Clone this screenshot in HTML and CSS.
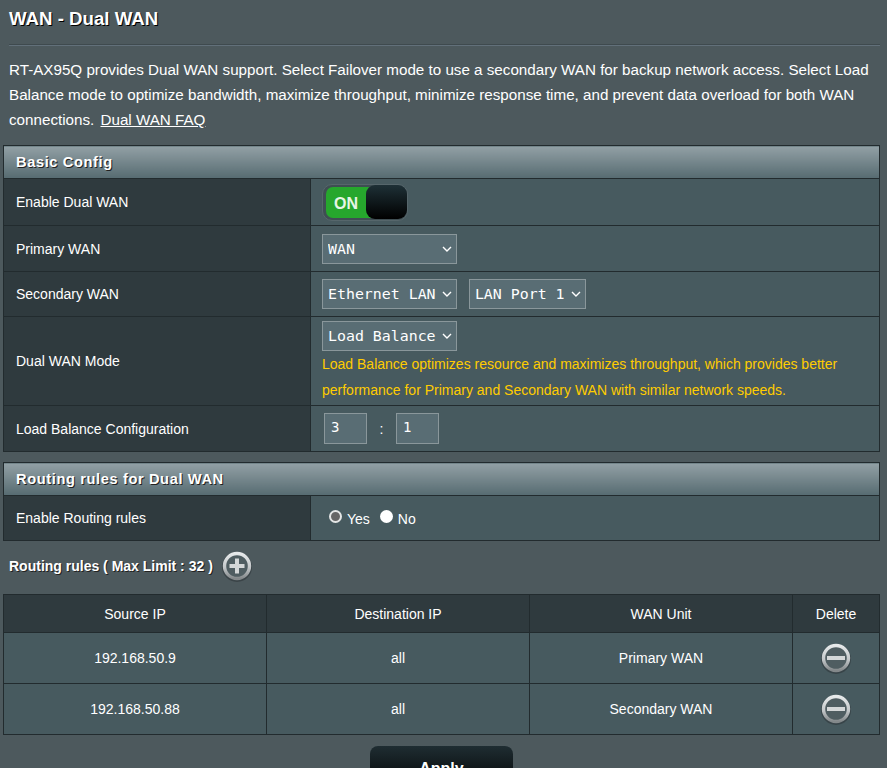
FILE: index.html
```html
<!DOCTYPE html>
<html lang="en">
<head>
<meta charset="utf-8">
<title>WAN - Dual WAN</title>
<link rel="stylesheet" href="styles.css">
</head>
<body>
<main class="page">
  <h1 class="title">WAN - Dual WAN</h1>
  <div class="divider"></div>
  <p class="intro">RT-AX95Q provides Dual WAN support. Select Failover mode to use a secondary WAN for backup network access. Select Load Balance mode to optimize bandwidth, maximize throughput, minimize response time, and prevent data overload for both WAN connections. <a class="faq" href="#">Dual WAN FAQ</a></p>

  <table class="form basic">
    <colgroup><col class="label-col"><col></colgroup>
    <thead><tr><th colspan="2" class="head">Basic Config</th></tr></thead>
    <tbody>
      <tr class="r47">
        <th>Enable Dual WAN</th>
        <td>
          <div class="toggle"><span class="on">ON</span><span class="knob"></span></div>
        </td>
      </tr>
      <tr class="r46">
        <th>Primary WAN</th>
        <td><span class="sel w135"><select><option>WAN</option></select><svg class="chev" viewBox="0 0 10 6"><path d="M1 1l4 4 4-4"/></svg></span></td>
      </tr>
      <tr class="r45">
        <th>Secondary WAN</th>
        <td class="pair">
          <span class="sel w135"><select><option>Ethernet LAN</option></select><svg class="chev" viewBox="0 0 10 6"><path d="M1 1l4 4 4-4"/></svg></span>
          <span class="sel w117"><select><option>LAN Port 1</option></select><svg class="chev" viewBox="0 0 10 6"><path d="M1 1l4 4 4-4"/></svg></span>
        </td>
      </tr>
      <tr>
        <th>Dual WAN Mode</th>
        <td class="mode">
          <span class="sel w135"><select><option>Load Balance</option></select><svg class="chev" viewBox="0 0 10 6"><path d="M1 1l4 4 4-4"/></svg></span>
          <div class="hint">Load Balance optimizes resource and maximizes throughput, which provides better performance for Primary and Secondary WAN with similar network speeds.</div>
        </td>
      </tr>
      <tr class="r46">
        <th>Load Balance Configuration</th>
        <td><div class="ratio"><input class="num" value="3"><span>:</span><input class="num" value="1"></div></td>
      </tr>
    </tbody>
  </table>

  <table class="form routing">
    <colgroup><col class="label-col"><col></colgroup>
    <thead><tr><th colspan="2" class="head">Routing rules for Dual WAN</th></tr></thead>
    <tbody>
      <tr class="r45">
        <th>Enable Routing rules</th>
        <td>
          <div class="radios">
            <span class="radio checked"></span><span class="rlabel">Yes</span>
            <span class="radio"></span><span class="rlabel">No</span>
          </div>
        </td>
      </tr>
    </tbody>
  </table>

  <div class="rules-title">
    <span>Routing rules ( Max Limit : 32 )</span>
    <svg class="icon" viewBox="0 0 32 32"><defs><linearGradient id="g1" x1="0" y1="0" x2="0" y2="1"><stop offset="0" stop-color="#e6e9ea"/><stop offset="0.55" stop-color="#c4c8ca"/><stop offset="1" stop-color="#83888a"/></linearGradient></defs><circle cx="16" cy="17" r="15" fill="#2b3336" opacity=".55"/><circle cx="16" cy="16" r="12.5" fill="#4f5d61" stroke="url(#g1)" stroke-width="3.4"/><path d="M8.5 16h15M16 8.5v15" stroke="#d4d7d8" stroke-width="4" fill="none"/></svg>
  </div>

  <table class="list">
    <colgroup><col class="c1"><col class="c1"><col class="c1"><col></colgroup>
    <thead>
      <tr><th>Source IP</th><th>Destination IP</th><th>WAN Unit</th><th>Delete</th></tr>
    </thead>
    <tbody>
      <tr>
        <td>192.168.50.9</td><td>all</td><td>Primary WAN</td>
        <td><svg class="icon" viewBox="0 0 32 32"><defs><linearGradient id="g2" x1="0" y1="0" x2="0" y2="1"><stop offset="0" stop-color="#e6e9ea"/><stop offset="0.55" stop-color="#c4c8ca"/><stop offset="1" stop-color="#83888a"/></linearGradient></defs><circle cx="16" cy="17" r="15" fill="#2b3336" opacity=".55"/><circle cx="16" cy="16" r="12.5" fill="#4f5d61" stroke="url(#g2)" stroke-width="3.4"/><path d="M7 16h18" stroke="#d4d7d8" stroke-width="4" fill="none"/></svg></td>
      </tr>
      <tr>
        <td>192.168.50.88</td><td>all</td><td>Secondary WAN</td>
        <td><svg class="icon" viewBox="0 0 32 32"><defs><linearGradient id="g3" x1="0" y1="0" x2="0" y2="1"><stop offset="0" stop-color="#e6e9ea"/><stop offset="0.55" stop-color="#c4c8ca"/><stop offset="1" stop-color="#83888a"/></linearGradient></defs><circle cx="16" cy="17" r="15" fill="#2b3336" opacity=".55"/><circle cx="16" cy="16" r="12.5" fill="#4f5d61" stroke="url(#g3)" stroke-width="3.4"/><path d="M7 16h18" stroke="#d4d7d8" stroke-width="4" fill="none"/></svg></td>
      </tr>
    </tbody>
  </table>

  <div class="actions"><button class="apply">Apply</button></div>
</main>
</body>
</html>
```
FILE: styles.css
```css
html { overflow: hidden; }
body {
  margin: 0;
  background: #4d595d;
  color: #fff;
  font-family: "Liberation Sans", Arial, sans-serif;
  font-size: 14px;
}
.page { padding: 0 7px 40px 3px; }
.title {
  margin: 0;
  padding: 9px 0 0 6px;
  height: 35px;
  box-sizing: border-box;
  font-size: 18.67px;
  line-height: 20px;
  font-weight: bold;
  text-shadow: 1px 1px 0 #000;
}
.divider {
  margin: 9px 0 0 6px;
  height: 2px;
  background: linear-gradient(#3f4a4e 50%, #62707a 50%);
}
.intro {
  margin: 11px 0 13px 6px;
  font-size: 15.2px;
  line-height: 25px;
  color: #fff;
}
.faq { color: #fff; text-decoration: underline; margin-left: 2px; }
.form, .list {
  width: 877px;
  border-collapse: collapse;
  table-layout: fixed;
}
.label-col { width: 307px; }
.form { border: 1px solid #222b2e; }
.form th, .form td { border: 1px solid #222b2e; }
.form th {
  padding: 0 0 0 12px;
  background: #2f3a3e;
  font-weight: normal;
  text-align: left;
  color: #fff;
}
.form td {
  padding: 0 0 0 11px;
  background: #475a5f;
}
.form .head {
  height: 32px;
  padding-left: 12px;
  background: linear-gradient(#92a0a5, #566b71);
  font-size: 14.67px;
  font-weight: bold;
  letter-spacing: .6px;
  text-shadow: 1px 1px 0 #222;
}
.r47 { height: 47px; }
.r46 { height: 46px; }
.r45 { height: 45px; }
.routing { margin-top: 10px; }
.toggle {
  position: relative;
  display: flex;
  width: 86px;
  height: 37px;
  box-sizing: border-box;
  padding: 2px 3px;
  border: 1px solid #56666b;
  border-radius: 10px;
  background: #3f4e53;
}
.on {
  width: 60px;
  height: 31px;
  padding-left: 8px;
  box-sizing: border-box;
  background: #26a72d;
  border-radius: 7px;
  font-size: 16px;
  font-weight: bold;
  line-height: 33px;
  color: #e6f5e6;
}
.knob {
  position: absolute;
  left: 43px;
  top: 0;
  width: 41px;
  height: 34px;
  border-radius: 9px;
  background: linear-gradient(#1e3036, #000);
}
.sel { position: relative; display: inline-block; vertical-align: middle; }
.w135 { width: 135px; }
.w117 { width: 117px; }
.sel select {
  appearance: none;
  display: block;
  width: 100%;
  height: 30px;
  padding: 0 0 0 5px;
  border: 1px solid #8a979b;
  border-radius: 0;
  background: #596d74;
  color: #fff;
  font-family: "DejaVu Sans Mono", monospace;
  font-size: 14.9px;
}
.chev {
  position: absolute;
  right: 5px;
  top: 12px;
  width: 10px;
  height: 6px;
  fill: none;
  stroke: #fff;
  stroke-width: 1.4;
  pointer-events: none;
}
.pair .sel + .sel { margin-left: 8px; }
.form .mode { padding-top: 4px; padding-bottom: 2px; }
.hint {
  color: #ffcc00;
  font-size: 14px;
  line-height: 26px;
  margin-top: 0;
}
.ratio { display: flex; align-items: center; margin-left: 2px; }
.ratio span { width: 29px; text-align: center; }
.num {
  width: 43px;
  height: 31px;
  box-sizing: border-box;
  padding: 0 0 4px 6px;
  border: 1px solid #8a979b;
  background: #596d74;
  color: #fff;
  font-family: "DejaVu Sans Mono", monospace;
  font-size: 14px;
}
.radios { display: flex; align-items: center; margin-left: 7px; }
.radio {
  width: 13px;
  height: 13px;
  box-sizing: border-box;
  margin-top: -4px;
  border-radius: 50%;
  background: #fff;
}
.radio.checked { border: 2px solid #e4e6e6; background: #666; }
.rlabel { margin: 2px 10px 0 5px; }
.rules-title {
  display: flex;
  align-items: center;
  gap: 8px;
  height: 53px;
  padding-bottom: 4px;
  box-sizing: border-box;
  padding-left: 6px;
  font-weight: bold;
  text-shadow: 1px 1px 0 #222;
}
.icon { display: block; width: 32px; height: 32px; margin: 0 auto; }
.rules-title .icon { margin: 0; }
.list { border: 1px solid #222b2e; }
.list th, .list td {
  border: 1px solid #222b2e;
  text-align: center;
  font-weight: normal;
  color: #fff;
  padding: 0;
}
.list .c1 { width: 263px; }
.list th { height: 37px; background: #2f3a3e; }
.list td { height: 50px; background: #475a5f; }
.actions { display: flex; justify-content: center; margin-top: 11px; }
.apply {
  width: 143px;
  height: 46px;
  border: 0;
  border-radius: 8px;
  background: linear-gradient(#1f2d32, #000);
  color: #fff;
  font-family: "Liberation Sans", Arial, sans-serif;
  font-size: 16px;
  font-weight: bold;
}
```
